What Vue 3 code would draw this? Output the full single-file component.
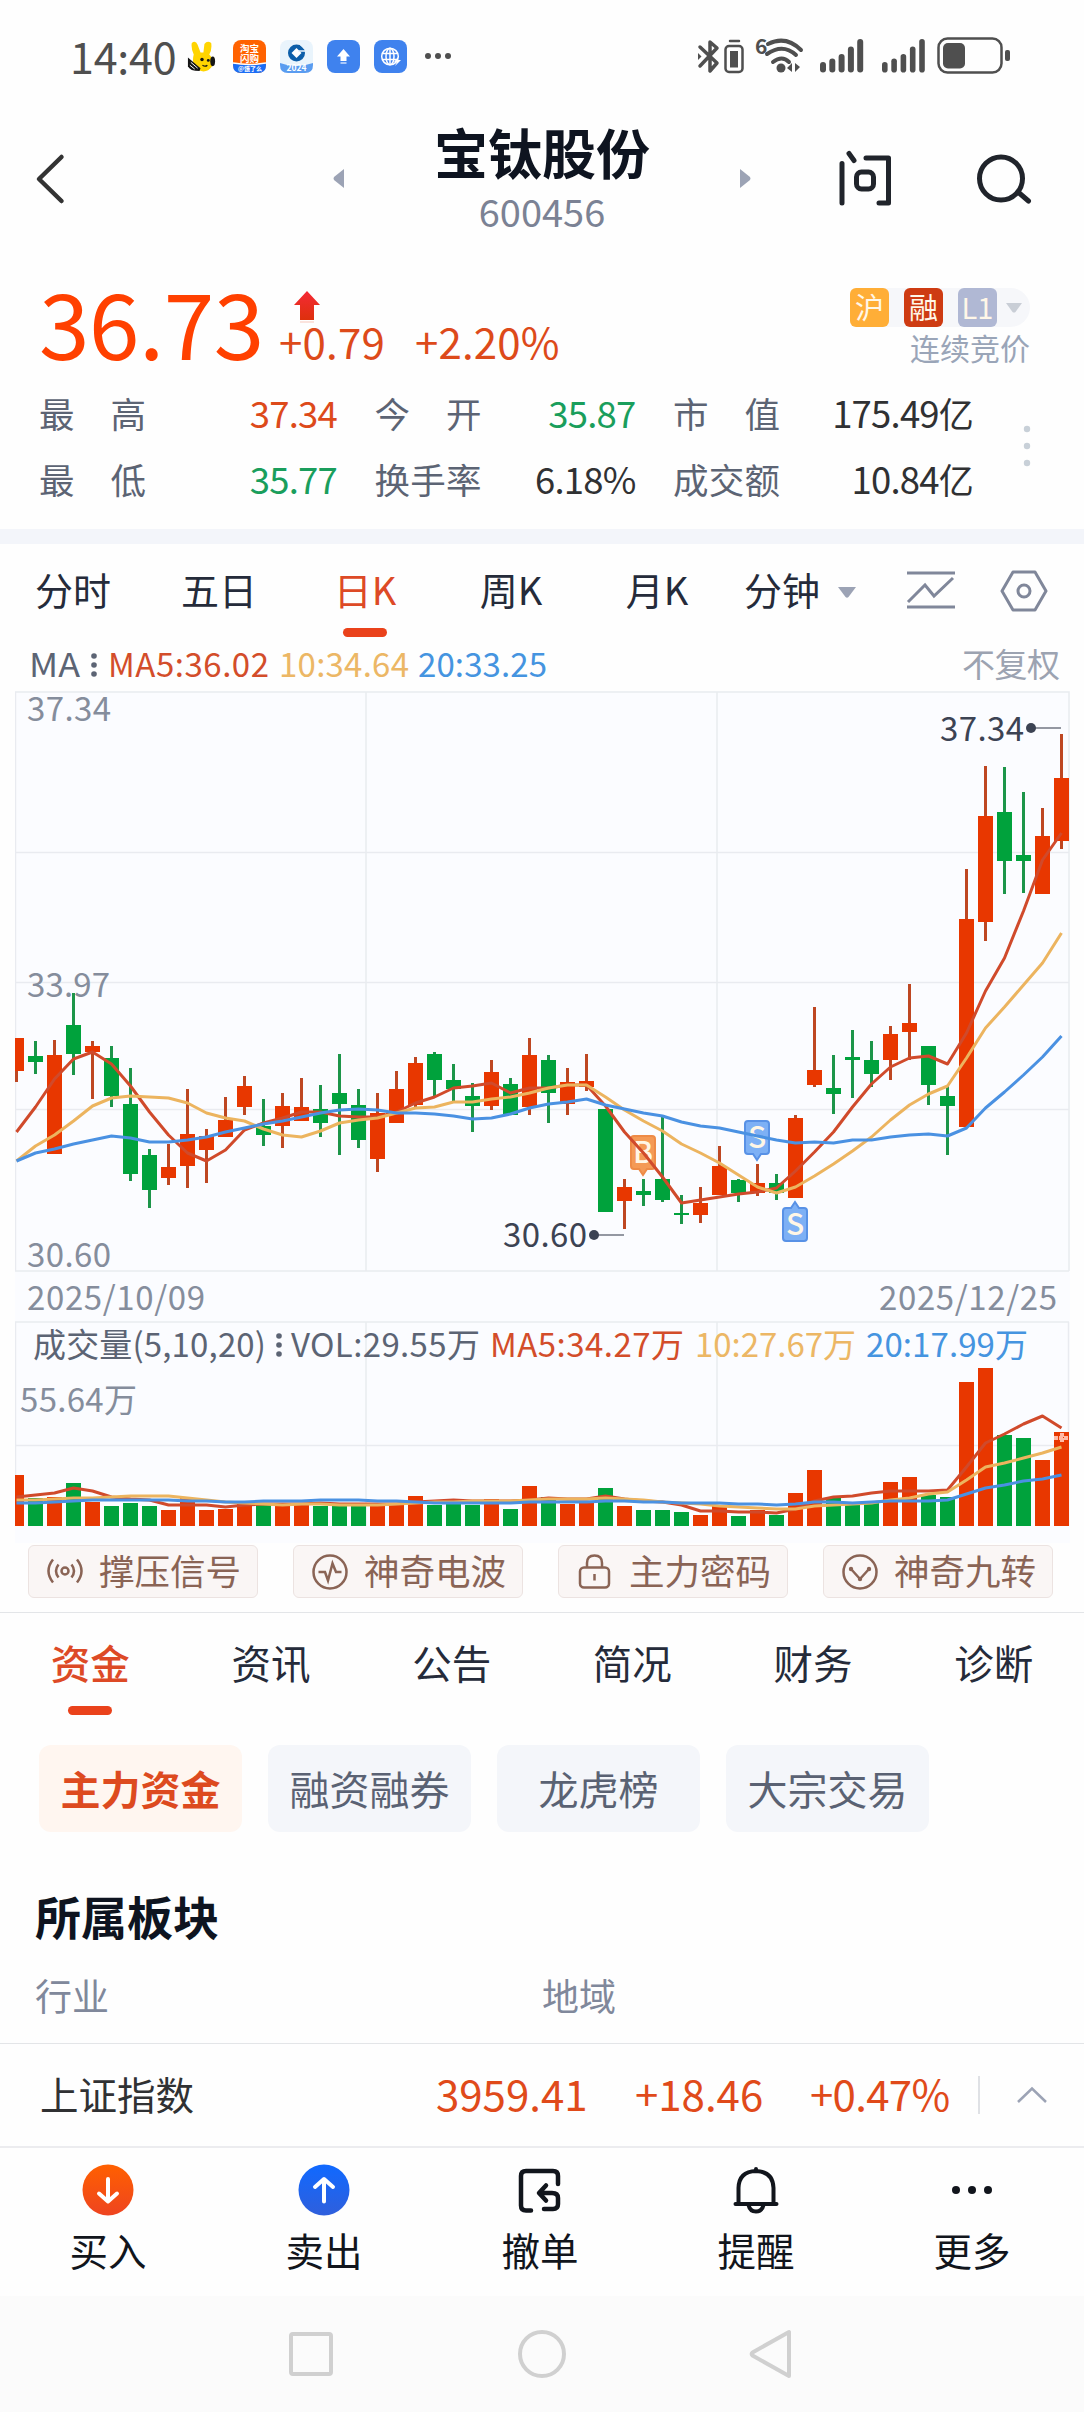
<template>
  <div class="page">
    <!-- Status bar -->
    <div class="status-bar">
      <div class="status-left">
        <span class="clock">14:40</span>
        <svg class="app-icon bunny" viewBox="0 0 30 34">
          <path d="M5 3 Q9 0 11 5 L14 13 L17 13 L18 4 Q21 0 25 3 Q26 10 23 15 Q28 20 26 27 Q20 35 12 31 Q4 26 7 15 Q4 8 5 3Z" fill="#ffd400"/>
          <path d="M1 18 L14 29 L13 32 Q3 32 1 27Z" fill="#151515"/>
          <path d="M4 23 L11 29 M3 26 L8 30" stroke="#fff" stroke-width="1"/>
          <ellipse cx="26.500" cy="22" rx="2.500" ry="5" fill="#151515"/>
          <circle cx="15.500" cy="20" r="1.800" fill="#151515"/>
          <circle cx="22" cy="21" r="1.500" fill="#151515"/>
          <path d="M16 26 Q19 28 21 26" fill="none" stroke="#151515" stroke-width="1.300"/>
        </svg>
        <svg class="app-icon" viewBox="0 0 33 33">
          <rect width="33" height="33" rx="8" fill="#ff6200"/>
          <path d="M0 23.500 Q16 26 33 23.500 V25 Q33 33 25 33 H8 Q0 33 0 25Z" fill="#1b6df5"/>
          <path d="M0 23 Q16 26 33 23" fill="none" stroke="#fff" stroke-width="1.500"/>
          <text x="16.500" y="12" class="mini" font-size="9.500">淘宝</text>
          <text x="16.500" y="21.500" class="mini" font-size="9.500">闪购</text>
          <text x="17" y="31" class="mini" font-size="6">@饿了么</text>
        </svg>
        <svg class="app-icon" viewBox="0 0 33 33">
          <rect width="33" height="33" rx="8" fill="#e9f4fc"/>
          <path d="M0 23 Q16 29 33 23 V25 Q33 33 25 33 H8 Q0 33 0 25Z" fill="#5a9cf0"/>
          <circle cx="16.500" cy="13" r="8.500" fill="#0c5ea9"/>
          <path d="M16.500 8 L21.500 13 L16.500 18 L11.500 13Z" fill="#fff"/>
          <path d="M20 4 L25 9 M18 11 H26" stroke="#e9f4fc" stroke-width="1.500"/>
          <text x="16.500" y="31" class="mini" font-size="8.500">2024</text>
        </svg>
        <svg class="app-icon" viewBox="0 0 33 33">
          <rect width="33" height="33" rx="8" fill="#3f82ee"/>
          <path d="M16.500 9 L23 16.500 H19.500 V21 H13.500 V16.500 H10Z" fill="#fff"/>
          <rect x="13.500" y="22" width="6" height="2" fill="#a9c8fa"/>
        </svg>
        <svg class="app-icon" viewBox="0 0 33 33">
          <rect width="33" height="33" rx="8" fill="#3f82ee"/>
          <g fill="none" stroke="#fff" stroke-width="1.500">
            <circle cx="16" cy="16.500" r="8.300"/>
            <ellipse cx="16" cy="16.500" rx="4" ry="8.300"/>
            <path d="M8 13.500 H24 M8 19.500 H24 M16 8 V25"/>
          </g>
          <path d="M24 17 L20 22 H23 L21 26 L27 20 H24Z" fill="#fff"/>
        </svg>
        <svg class="more-dots" viewBox="0 0 28 8" fill="#4f4f4f">
          <circle cx="4" cy="4" r="3"/><circle cx="14" cy="4" r="3"/><circle cx="24" cy="4" r="3"/>
        </svg>
      </div>

      <svg class="status-right" viewBox="696 34 320 44">
        <g fill="none" stroke="#4f4f4f" stroke-width="3.500" stroke-linejoin="round" stroke-linecap="round">
          <path d="M700 47 L717 63 L710 71 V42 L717 48 L700 66"/>
          <rect x="725.500" y="46" width="17" height="26" rx="3.500" stroke-width="2.500"/>
          <path d="M730 41 H739" stroke-width="2.500"/>
          <path d="M768 44 Q786 35 801 50 M767 54 Q783 43 796 55 M773 62 Q782 55 789 62" stroke-width="4"/>
        </g>
        <path d="M698 53 L701.500 56.500 L698 60Z" fill="#4f4f4f"/>
        <rect x="730" y="51" width="8" height="16.500" fill="#4f4f4f"/>
        <text x="755" y="54" class="wifi-gen">6</text>
        <circle cx="781" cy="68" r="4.500" fill="#4f4f4f"/>
        <path d="M787 68 L792 63 V72 M800 67 L795 72 V63" fill="#4f4f4f"/>
        <g fill="#4f4f4f">
          <rect v-for="(h, i) in signal" :key="'a' + i" :x="820 + i * 9.300" :y="72.500 - h" width="6" :height="h" rx="3"/>
          <rect v-for="(h, i) in signal" :key="'b' + i" :x="882 + i * 9.300" :y="72.500 - h" width="5.600" :height="h" rx="2.800"/>
        </g>
        <rect x="938.500" y="38.500" width="63" height="34" rx="9" fill="none" stroke="#4f4f4f" stroke-width="2.500"/>
        <rect x="943" y="43" width="22" height="25.500" rx="5" fill="#4f4f4f"/>
        <rect x="1005" y="50" width="5" height="11" rx="2" fill="#4f4f4f"/>
      </svg>
    </div>

    <!-- Title bar -->
    <header class="title-bar">
      <svg class="back" viewBox="0 0 30 52">
        <path d="M26.500 4 L4 26 L26.500 48" fill="none" stroke="#333" stroke-width="4.500" stroke-linecap="round" stroke-linejoin="round"/>
      </svg>
      <div class="stock">
        <svg class="switch" viewBox="0 0 12 19"><path d="M11 0 V19 L1 11 Q0 9.500 1 8Z" fill="#9ca3b5"/></svg>
        <div class="stock-name">
          <h1>宝钛股份</h1>
          <div class="stock-code">600456</div>
        </div>
        <svg class="switch" viewBox="0 0 12 19"><path d="M1 0 V19 L11 11 Q12 9.500 11 8Z" fill="#9ca3b5"/></svg>
      </div>
      <svg class="ask" viewBox="838 148 56 60">
        <g fill="none" stroke="#20242b" stroke-width="5" stroke-linecap="round" stroke-linejoin="round">
          <path d="M842 163.500 V203 M849 153.500 L854 160.500 M866 158 H888.500 V203 H879"/>
          <rect x="856.500" y="172" width="17" height="17" rx="5"/>
        </g>
      </svg>
      <svg class="search" viewBox="974 150 60 56">
        <g fill="none" stroke="#20242b" stroke-width="5" stroke-linecap="round">
          <circle cx="1001" cy="178.500" r="21.500"/>
          <path d="M1018 192 L1028.500 201"/>
        </g>
      </svg>
    </header>

    <!-- Quote -->
    <section class="quote">
      <div class="price-row">
        <span class="price">36.73</span>
        <div class="change">
          <svg class="rise" viewBox="0 0 26 32">
            <defs>
              <linearGradient id="rise" x1="0" y1="0" x2="0" y2="1">
                <stop offset="0" stop-color="#f52a36"/>
                <stop offset="1" stop-color="#dd300c"/>
              </linearGradient>
            </defs>
            <path d="M13 0 L26 14 H20 V29 H6 V14 H0Z" fill="url(#rise)"/>
            <rect x="6" y="30" width="14" height="2" fill="#fbe3dd"/>
          </svg>
          <div class="change-values"><span>+0.79</span><span>+2.20%</span></div>
        </div>
        <div class="tags">
          <div class="tag-row">
            <span class="tag amber">沪</span>
            <span class="tag red">融</span>
            <span class="tag slate">L1</span>
            <svg class="caret" viewBox="0 0 16 10"><path d="M0 0 H16 L9.500 9 Q8 10 6.500 9Z" fill="#c9ced6"/></svg>
          </div>
          <div class="phase">连续竞价</div>
        </div>
      </div>
      <div class="facts">
        <div class="fact-rows">
          <div v-for="(row, r) in facts" :key="r" class="fact-row">
            <div v-for="f in row" :key="f.label" class="fact">
              <span class="fact-label">{{ f.label }}</span>
              <span :class="['fact-value', f.tone]">{{ f.value }}<i v-if="f.unit">{{ f.unit }}</i></span>
            </div>
          </div>
        </div>
        <svg class="facts-more" viewBox="0 0 8 44" fill="#c8d0d8">
          <circle cx="4" cy="5" r="3.200"/><circle cx="4" cy="22" r="3.200"/><circle cx="4" cy="39" r="3.200"/>
        </svg>
      </div>
    </section>

    <!-- Period tabs -->
    <nav class="periods">
      <span v-for="p in periods" :key="p" :class="['period', { active: p === '日K' }]">{{ p }}</span>
      <span class="period minutes">分钟
        <svg class="minutes-caret" viewBox="0 0 18 11"><path d="M0 0 H18 L10.500 10 Q9 11.500 7.500 10Z" fill="#9ca3b5"/></svg>
      </span>
      <svg class="period-icon" viewBox="0 0 50 42">
        <g fill="none" stroke="#80879a" stroke-width="3">
          <path d="M1 4 H49 M1 38 H49 M2 33 L19 16 L28 27 L47 9"/>
        </g>
      </svg>
      <svg class="period-icon hex" viewBox="0 0 48 44">
        <g fill="none" stroke="#80879a" stroke-width="3" stroke-linejoin="round">
          <path d="M13 3 H35 L46 22 L35 41 H13 L2 22Z"/>
          <circle cx="24" cy="22" r="6"/>
        </g>
      </svg>
    </nav>

    <!-- MA legend -->
    <div class="legend">
      <svg class="legend-text" viewBox="0 640 1084 52">
        <text x="29" y="677" textLength="51" lengthAdjust="spacingAndGlyphs" class="c-slate">MA</text>
        <g fill="#5c6474"><circle cx="94" cy="656" r="2.800"/><circle cx="94" cy="665" r="2.800"/><circle cx="94" cy="674" r="2.800"/></g>
        <text x="108" y="677" textLength="161" class="c-ma5">MA5:36.02</text>
        <text x="279" y="677" textLength="130" class="c-ma10">10:34.64</text>
        <text x="418" y="677" textLength="129" class="c-ma20">20:33.25</text>
        <text x="962" y="677" textLength="98" class="c-adjust">不复权</text>
      </svg>
    </div>

    <!-- Charts -->
    <svg class="charts" viewBox="15 691 1055 852">
      <rect x="15" y="691" width="1055" height="852" fill="#fbfcff"/>
      <g fill="none" stroke="#e9ebf0" stroke-width="1.500">
        <path d="M15.500 1271 V692 H1069 V1271"/>
        <path d="M15 852.500 H1069 M15 982.500 H1069 M15 1109.500 H1069"/>
        <path d="M366 692 V1271 M717 692 V1271 M15 1271 H1069 M15 1322 H1069"/>
        <path d="M15.500 1526 V1322 M1068.500 1322 V1526 M366 1322 V1526 M717 1322 V1526 M15 1445.500 H1069"/>
      </g>
      <g class="axis">
        <text x="27" y="721" textLength="84">37.34</text>
        <text x="27" y="997" textLength="83">33.97</text>
        <text x="27" y="1267" textLength="84">30.60</text>
        <text x="27" y="1310" textLength="178">2025/10/09</text>
        <text x="879" y="1310" textLength="178">2025/12/25</text>
      </g>

      <g v-for="(c, i) in candles" :key="'k' + i" :class="c[0] === 'R' ? 'up' : 'down'">
        <rect class="wick" :x="candleX(i) - 1.500" :y="c[1]" width="3" :height="c[4] - c[1]"/>
        <rect :x="candleX(i) - 7.500" :y="c[2]" width="15" :height="c[3] - c[2]"/>
      </g>

      <!-- Trade markers -->
      <g v-for="m in markers" :key="m.x">
        <path :d="markerPath(m)" :fill="m.fill" :stroke="m.stroke" stroke-width="2"/>
        <text :x="m.x" :y="m.y + 27" class="marker">{{ m.text }}</text>
      </g>

      <g class="lines">
        <polyline :points="toPoints(ma5)" class="l-ma5"/>
        <polyline :points="toPoints(ma10)" class="l-ma10"/>
        <polyline :points="toPoints(ma20)" class="l-ma20"/>
      </g>

      <!-- Extremes -->
      <g class="extreme">
        <text x="940" y="741" textLength="84">37.34</text>
        <path d="M1031 728 H1061"/>
        <circle cx="1031" cy="728" r="5"/>
        <text x="503" y="1247" textLength="84">30.60</text>
        <path d="M594 1235 H624"/>
        <circle cx="594" cy="1235" r="5"/>
      </g>

      <!-- Volume -->
      <g class="vol-legend">
        <text x="33" y="1357" textLength="233" class="c-slate">成交量(5,10,20)</text>
        <g fill="#5c6474"><circle cx="279" cy="1336" r="2.800"/><circle cx="279" cy="1345" r="2.800"/><circle cx="279" cy="1354" r="2.800"/></g>
        <text x="291" y="1357" textLength="189" class="c-slate">VOL:29.55万</text>
        <text x="490" y="1357" textLength="194" class="c-ma5">MA5:34.27万</text>
        <text x="695" y="1357" textLength="161" class="c-ma10">10:27.67万</text>
        <text x="866" y="1357" textLength="162" class="c-ma20">20:17.99万</text>
        <text x="20" y="1412" textLength="117" class="c-axis">55.64万</text>
      </g>
      <rect
        v-for="(top, i) in volumes"
        :key="'v' + i"
        :class="candles[i][0] === 'R' ? 'up' : 'down'"
        :x="candleX(i) - 7.500"
        :y="top"
        width="15"
        :height="1526 - top"
      />
      <path d="M1054 1438 H1069 M1062 1433 V1442" stroke="#ffb9a5" stroke-width="4" stroke-dasharray="4 1"/>
      <g class="lines">
        <polyline :points="toPoints(vol5)" class="l-ma5"/>
        <polyline :points="toPoints(vol10)" class="l-ma10"/>
        <polyline :points="toPoints(vol20)" class="l-ma20"/>
      </g>
    </svg>

    <!-- Signal shortcuts -->
    <div class="signals">
      <div class="signal">
        <svg viewBox="0 0 36 36">
          <circle cx="18" cy="17" r="3.500"/>
          <path d="M11.500 10.500 Q6.500 17 11.500 23.500 M24.500 10.500 Q29.500 17 24.500 23.500 M6 5.500 Q-3 17 6 28.500 M30 5.500 Q39 17 30 28.500"/>
        </svg>
        <span>撑压信号</span>
      </div>
      <div class="signal">
        <svg viewBox="0 0 36 36">
          <circle cx="18" cy="18" r="16.500"/>
          <path d="M6.500 18 H13 L16 26.500 L20.500 9.500 L24 18 H29.500"/>
        </svg>
        <span>神奇电波</span>
      </div>
      <div class="signal">
        <svg viewBox="0 0 36 36">
          <rect x="3" y="13.500" width="29" height="20" rx="4"/>
          <path d="M10 13 V9 Q10 1.500 17.500 1.500 Q25 1.500 25 9 V13 M17.500 20 V26.500"/>
        </svg>
        <span>主力密码</span>
      </div>
      <div class="signal">
        <svg viewBox="0 0 36 36">
          <circle cx="18" cy="18" r="16.500"/>
          <path d="M9 15 L18 25 L27 15"/>
          <g class="dots"><circle cx="9" cy="15" r="2.200"/><circle cx="18" cy="25" r="2.200"/><circle cx="27" cy="15" r="2.200"/></g>
        </svg>
        <span>神奇九转</span>
      </div>
    </div>

    <!-- Detail tabs -->
    <nav class="tabs">
      <span v-for="(t, i) in tabs" :key="t" :class="['tab', { active: i === 0 }]">{{ t }}</span>
    </nav>
    <div class="pills">
      <span v-for="(p, i) in pills" :key="p" :class="['pill', { active: i === 0 }]">{{ p }}</span>
    </div>

    <section class="sector">
      <h2>所属板块</h2>
      <div class="sector-row"><span>行业</span><span>地域</span></div>
    </section>

    <!-- Index ticker -->
    <div class="index">
      <span class="index-name">上证指数</span>
      <span class="index-num last">3959.41</span>
      <span class="index-num diff">+18.46</span>
      <span class="index-num pct">+0.47%</span>
      <span class="index-sep"></span>
      <svg class="chevron" viewBox="0 0 32 18"><path d="M2 16 L16 2.500 L30 16" fill="none" stroke="#9ca3b5" stroke-width="2.500"/></svg>
    </div>

    <!-- Actions -->
    <nav class="actions">
      <div class="action">
        <svg viewBox="0 0 52 52">
          <defs>
            <linearGradient id="buy" x1="0" y1="0" x2="0" y2="1"><stop offset="0" stop-color="#ff6000"/><stop offset="1" stop-color="#ee4420"/></linearGradient>
          </defs>
          <circle cx="26" cy="26" r="25.500" fill="url(#buy)"/>
          <path d="M26 15 V37 M17 29.500 L26 37.500 L35 29.500" fill="none" stroke="#fff" stroke-width="4" stroke-linecap="round" stroke-linejoin="round"/>
        </svg>
        <span>买入</span>
      </div>
      <div class="action">
        <svg viewBox="0 0 52 52">
          <defs>
            <linearGradient id="sell" x1="0" y1="0" x2="0" y2="1"><stop offset="0" stop-color="#1069ff"/><stop offset="1" stop-color="#2f5fdc"/></linearGradient>
          </defs>
          <circle cx="26" cy="26" r="25.500" fill="url(#sell)"/>
          <path d="M26 37.500 V15.500 M17 23 L26 15 L35 23" fill="none" stroke="#fff" stroke-width="4" stroke-linecap="round" stroke-linejoin="round"/>
        </svg>
        <span>卖出</span>
      </div>
      <div class="action">
        <svg viewBox="0 0 52 52">
          <g fill="none" stroke="#11151c" stroke-width="4.500" stroke-linecap="round" stroke-linejoin="round">
            <path d="M17 46.500 H12 Q7 46.500 7 41.500 V12 Q7 7 12 7 H39 Q44 7 44 12 V20"/>
            <path d="M32 21.500 L25 29 L32 36.500 M26 29 H38 Q44 29 44 34 V40 Q44 45 39 45 H30"/>
          </g>
        </svg>
        <span>撤单</span>
      </div>
      <div class="action">
        <svg viewBox="0 0 52 52">
          <g fill="none" stroke="#11151c" stroke-width="4" stroke-linecap="round" stroke-linejoin="round">
            <path d="M5.500 40 H46.500 M8.500 39 V24 Q9 7.500 26 7 Q43 7.500 43.500 24 V39 M26 7 V5"/>
            <path d="M18.500 41 Q20 47.500 26 47.500 Q32 47.500 33.500 41"/>
          </g>
        </svg>
        <span>提醒</span>
      </div>
      <div class="action">
        <svg viewBox="0 0 52 52" fill="#11151c">
          <circle cx="10" cy="26" r="4"/><circle cx="26" cy="26" r="4"/><circle cx="42" cy="26" r="4"/>
        </svg>
        <span>更多</span>
      </div>
    </nav>

    <!-- System navigation -->
    <div class="sys-nav">
      <svg viewBox="280 2320 520 70">
        <g fill="none" stroke="#d0d0d0" stroke-width="4" stroke-linejoin="round">
          <rect x="291" y="2334" width="40" height="40" rx="2"/>
          <circle cx="542" cy="2354" r="22"/>
          <path d="M789 2332 V2376 L752.500 2355.500 Q751 2354 752.500 2352.500Z"/>
        </g>
      </svg>
    </div>
  </div>
</template>

<script setup>
const signal = [10.5, 14, 18.5, 26, 33.5];

const facts = [
  [
    { label: '最 高', value: '37.34', tone: 'rise-text' },
    { label: '今 开', value: '35.87', tone: 'fall-text' },
    { label: '市 值', value: '175.49', unit: '亿', tone: '' }
  ],
  [
    { label: '最 低', value: '35.77', tone: 'fall-text' },
    { label: '换手率', value: '6.18%', tone: '' },
    { label: '成交额', value: '10.84', unit: '亿', tone: '' }
  ]
];

const periods = ['分时', '五日', '日K', '周K', '月K'];
const tabs = ['资金', '资讯', '公告', '简况', '财务', '诊断'];
const pills = ['主力资金', '融资融券', '龙虎榜', '大宗交易'];

// [direction, high, body top, body bottom, low] in chart units
const candles = [
  ['R', 1038, 1038, 1071, 1082],
  ['G', 1041, 1056, 1062, 1074],
  ['R', 1040, 1055, 1154, 1154],
  ['G', 993, 1025, 1054, 1075],
  ['R', 1041, 1046, 1052, 1099],
  ['G', 1046, 1058, 1096, 1107],
  ['G', 1068, 1104, 1174, 1181],
  ['G', 1149, 1155, 1190, 1208],
  ['R', 1144, 1167, 1178, 1185],
  ['R', 1089, 1134, 1166, 1188],
  ['R', 1129, 1136, 1150, 1183],
  ['R', 1097, 1120, 1137, 1137],
  ['R', 1076, 1086, 1107, 1115],
  ['G', 1099, 1126, 1135, 1146],
  ['R', 1093, 1106, 1126, 1148],
  ['R', 1078, 1107, 1121, 1121],
  ['G', 1085, 1109, 1123, 1137],
  ['G', 1054, 1093, 1104, 1155],
  ['G', 1089, 1105, 1140, 1148],
  ['R', 1093, 1113, 1159, 1172],
  ['R', 1071, 1089, 1123, 1123],
  ['R', 1057, 1063, 1105, 1109],
  ['G', 1052, 1054, 1080, 1097],
  ['G', 1064, 1080, 1089, 1101],
  ['G', 1083, 1096, 1106, 1132],
  ['R', 1060, 1072, 1106, 1110],
  ['G', 1078, 1084, 1115, 1115],
  ['R', 1038, 1055, 1107, 1115],
  ['G', 1055, 1060, 1093, 1123],
  ['R', 1068, 1082, 1104, 1115],
  ['R', 1054, 1081, 1087, 1091],
  ['G', 1109, 1109, 1212, 1212],
  ['R', 1179, 1187, 1201, 1229],
  ['G', 1179, 1191, 1195, 1206],
  ['G', 1116, 1179, 1200, 1202],
  ['G', 1195, 1213, 1215, 1224],
  ['R', 1187, 1203, 1215, 1223],
  ['R', 1146, 1166, 1195, 1195],
  ['G', 1179, 1180, 1193, 1202],
  ['R', 1164, 1183, 1193, 1196],
  ['G', 1174, 1183, 1193, 1200],
  ['R', 1115, 1118, 1198, 1198],
  ['R', 1007, 1070, 1085, 1087],
  ['G', 1055, 1088, 1094, 1114],
  ['G', 1030, 1057, 1060, 1098],
  ['G', 1041, 1060, 1074, 1087],
  ['R', 1026, 1034, 1060, 1080],
  ['R', 984, 1023, 1032, 1060],
  ['G', 1046, 1046, 1085, 1105],
  ['G', 1085, 1096, 1106, 1155],
  ['R', 869, 919, 1127, 1127],
  ['R', 766, 816, 922, 941],
  ['G', 767, 812, 861, 894],
  ['G', 792, 855, 861, 893],
  ['R', 808, 836, 894, 894],
  ['R', 734, 778, 841, 849]
];

const ma5 = [
  1132, 1107, 1079, 1059, 1052, 1064, 1086, 1112, 1135, 1153, 1161, 1150, 1130, 1123,
  1118, 1112, 1112, 1116, 1117, 1117, 1112, 1103, 1097, 1088, 1086, 1083, 1093, 1088,
  1088, 1085, 1085, 1106, 1132, 1153, 1177, 1203, 1200, 1197, 1194, 1192, 1188, 1171,
  1152, 1132, 1107, 1084, 1067, 1058, 1056, 1064, 1033, 991, 958, 911, 860, 833
];
const ma10 = [
  1161, 1146, 1135, 1121, 1106, 1098, 1096, 1097, 1098, 1103, 1113, 1118, 1121, 1129,
  1135, 1137, 1131, 1123, 1120, 1118, 1113, 1108, 1107, 1102, 1102, 1099, 1097, 1093,
  1088, 1085, 1085, 1097, 1110, 1121, 1131, 1144, 1153, 1163, 1175, 1187, 1193, 1187,
  1176, 1164, 1151, 1137, 1120, 1105, 1094, 1086, 1058, 1028, 1007, 985, 963, 933
];
const ma20 = [
  1161, 1153, 1149, 1144, 1140, 1136, 1138, 1142, 1142, 1140, 1137, 1132, 1128, 1124,
  1121, 1117, 1113, 1110, 1109, 1110, 1113, 1113, 1114, 1116, 1119, 1118, 1114, 1108,
  1104, 1102, 1099, 1105, 1109, 1113, 1116, 1122, 1126, 1128, 1132, 1136, 1140, 1143,
  1142, 1143, 1140, 1140, 1137, 1135, 1134, 1136, 1128, 1108, 1092, 1075, 1057, 1036
];

const volumes = [
  1475, 1498, 1497, 1483, 1502, 1506, 1503, 1506, 1510, 1498, 1510, 1509, 1503, 1503,
  1505, 1505, 1506, 1506, 1506, 1505, 1505, 1496, 1505, 1504, 1505, 1499, 1509, 1486,
  1497, 1504, 1502, 1488, 1506, 1510, 1510, 1512, 1515, 1506, 1516, 1510, 1515, 1493,
  1470, 1498, 1504, 1503, 1482, 1477, 1495, 1497, 1382, 1368, 1435, 1438, 1460, 1432
];
const vol5 = [
  1497, 1495, 1493, 1488, 1491, 1497, 1499, 1500, 1505, 1505, 1505, 1507, 1505, 1504,
  1504, 1504, 1503, 1504, 1504, 1504, 1504, 1502, 1501, 1500, 1501, 1501, 1501, 1500,
  1498, 1499, 1499, 1496, 1499, 1501, 1502, 1505, 1511, 1511, 1512, 1512, 1513, 1509,
  1501, 1497, 1496, 1493, 1491, 1491, 1491, 1490, 1467, 1443, 1434, 1424, 1416, 1428
];
const vol10 = [
  1500, 1500, 1499, 1498, 1498, 1497, 1496, 1496, 1496, 1498, 1500, 1502, 1503, 1504,
  1505, 1504, 1504, 1505, 1505, 1505, 1504, 1503, 1502, 1502, 1501, 1501, 1501, 1500,
  1499, 1499, 1499, 1498, 1499, 1500, 1502, 1503, 1504, 1506, 1507, 1508, 1509, 1509,
  1506, 1505, 1504, 1503, 1500, 1498, 1494, 1492, 1480, 1467, 1463, 1458, 1453, 1447
];
const vol20 = [
  1503, 1503, 1502, 1501, 1500, 1500, 1500, 1500, 1500, 1501, 1501, 1502, 1502, 1501,
  1501, 1501, 1500, 1500, 1500, 1501, 1501, 1502, 1503, 1503, 1503, 1503, 1503, 1502,
  1502, 1502, 1502, 1501, 1501, 1502, 1502, 1503, 1503, 1503, 1504, 1504, 1505, 1504,
  1502, 1502, 1503, 1502, 1501, 1501, 1501, 1500, 1494, 1488, 1485, 1481, 1479, 1475
];

const markers = [
  { text: 'B', x: 643, y: 1136, fill: '#f49a56', stroke: '#ee8b47', up: false },
  { text: 'S', x: 757, y: 1121, fill: '#7db0f5', stroke: '#5891e6', up: false },
  { text: 'S', x: 795, y: 1208, fill: '#7db0f5', stroke: '#5891e6', up: true }
];

const candleX = (i) => 16.5 + i * 19;

const toPoints = (series) => series.map((y, i) => `${candleX(i)},${y}`).join(' ');

// Rounded flag with a small pointer on its top or bottom edge
const markerPath = ({ x, y, up }) => {
  const top = up ? `L${x - 4} ${y} L${x} ${y - 6} L${x + 4} ${y}` : '';
  const bottom = up ? '' : `L${x + 4} ${y + 33} L${x} ${y + 39} L${x - 4} ${y + 33}`;
  return `M${x - 9} ${y} ${top} L${x + 9} ${y} Q${x + 12} ${y} ${x + 12} ${y + 3} V${y + 30} Q${x + 12} ${y + 33} ${x + 9} ${y + 33} ${bottom} L${x - 9} ${y + 33} Q${x - 12} ${y + 33} ${x - 12} ${y + 30} V${y + 3} Q${x - 12} ${y} ${x - 9} ${y}Z`;
};
</script>

<style>
body {
  margin: 0;
  background: #fefefe;
}
</style>

<style scoped>
.page {
  width: 1084px;
  height: 2412px;
  overflow: hidden;
  display: flex;
  flex-direction: column;
  background: #fefefe;
  color: #252b3a;
  font-family: "Noto Sans CJK SC", "Noto Sans", sans-serif;
}

.page > * {
  flex-shrink: 0;
}

svg {
  display: block;
  flex-shrink: 0;
}

/* Status bar */
.status-bar {
  height: 112px;
  box-sizing: border-box;
  padding: 0 68px 0 70px;
  display: flex;
  justify-content: space-between;
  align-items: center;
}

.status-left {
  display: flex;
  align-items: center;
  gap: 14px;
}

.clock {
  width: 101px;
  margin-top: -3px;
  font-size: 43px;
  line-height: 60px;
  letter-spacing: -0.2px;
  color: #4f4f4f;
}

.app-icon {
  width: 33px;
  height: 33px;
}

.bunny {
  margin-right: 1px;
}

.mini {
  fill: #fff;
  text-anchor: middle;
  font-weight: 700;
}

.more-dots {
  width: 28px;
  height: 8px;
  margin-left: 3px;
}

.status-right {
  width: 320px;
  height: 44px;
  overflow: visible;
}

.wifi-gen {
  font-size: 21px;
  font-weight: 700;
  fill: #4f4f4f;
}

/* Title bar */
.title-bar {
  height: 148px;
  box-sizing: border-box;
  padding: 0 50px 0 35px;
  display: flex;
  align-items: center;
}

.back {
  width: 30px;
  height: 52px;
  margin-top: -14px;
}

.stock {
  width: 418px;
  margin-left: 268px;
  margin-top: -19px;
  display: flex;
  align-items: center;
  justify-content: space-between;
}

.switch {
  width: 12px;
  height: 19px;
  margin-top: 4px;
}

.stock-name {
  text-align: center;
}

.stock-name h1 {
  margin: 0;
  font-size: 54px;
  line-height: 68px;
  font-weight: 700;
  color: #0e1420;
}

.stock-code {
  font-size: 38px;
  line-height: 50px;
  color: #7b8294;
}

.ask {
  width: 56px;
  height: 60px;
  margin: -16px 0 0 87px;
}

.search {
  width: 60px;
  height: 56px;
  margin: -16px 0 0 80px;
}

/* Quote */
.quote {
  height: 269px;
  border-bottom: 15px solid #f3f5fa;
}

.price-row {
  height: 121px;
  padding: 0 54px 0 39px;
  display: flex;
  align-items: flex-start;
}

.price {
  width: 240px;
  font-size: 91px;
  line-height: 121px;
  letter-spacing: -0.5px;
  color: #ff4000;
}

.change {
  flex: 1;
  padding-top: 31px;
}

.rise {
  width: 26px;
  height: 32px;
  margin-left: 15px;
}

.change-values {
  display: flex;
  gap: 30px;
  margin-top: -4px;
  font-size: 42px;
  line-height: 44px;
  letter-spacing: 0.2px;
  color: #dd4a1a;
}

.tags {
  width: 180px;
  padding-top: 28px;
}

.tag-row {
  display: flex;
  align-items: center;
  height: 39px;
  gap: 15px;
  background: #f6f7fa;
  border-radius: 8px 20px 20px 8px;
}

.tag {
  width: 39px;
  height: 39px;
  border-radius: 6px;
  font-size: 29px;
  line-height: 37px;
  text-align: center;
  color: #fff7e8;
}

.tag.amber {
  background: #ffae37;
}

.tag.red {
  background: #ce3b12;
}

.tag.slate {
  background: #b0b8d4;
}

.caret {
  width: 16px;
  height: 10px;
  margin-left: -6px;
}

.phase {
  font-size: 30px;
  line-height: 40px;
  text-align: right;
  color: #9aa5b8;
}

.facts {
  display: flex;
  padding: 0 53px 0 39px;
  justify-content: space-between;
}

.fact-rows {
  width: 934px;
}

.fact-row {
  height: 66px;
  display: flex;
  justify-content: space-between;
}

.fact {
  width: 298px;
  display: flex;
  justify-content: space-between;
  line-height: 64px;
}

.fact:nth-child(2) {
  width: 261px;
}

.fact:nth-child(3) {
  width: 300px;
}

.fact-label {
  width: 107px;
  font-size: 35.5px;
  text-align: justify;
  text-align-last: justify;
  color: #5c6474;
}

.fact-value {
  font-size: 36.5px;
  letter-spacing: -0.8px;
  color: #303133;
}

.fact-value i {
  font-style: normal;
  font-size: 35px;
}

.fact-value.rise-text {
  color: #dd4a1a;
}

.fact-value.fall-text {
  color: #1a9e5c;
}

.facts-more {
  width: 8px;
  height: 44px;
  margin-top: 43px;
}

/* Period tabs */
.periods {
  height: 96px;
  display: flex;
  align-items: flex-start;
  font-size: 38px;
  line-height: 90px;
  color: #252b3a;
}

.period {
  width: 146px;
  text-align: center;
  position: relative;
}

.period.active {
  color: #dd4a26;
}

.period.active::after,
.tab.active::after {
  content: "";
  position: absolute;
  left: 50%;
  width: 44px;
  height: 9px;
  margin-left: -22px;
  border-radius: 5px;
  background: #ea421b;
}

.period.active::after {
  top: 84px;
}

.minutes {
  width: 156px;
  margin-left: 14px;
  display: flex;
  align-items: center;
  gap: 18px;
}

.minutes-caret {
  width: 18px;
  height: 11px;
  margin-top: 6px;
}

.period-icon {
  width: 50px;
  height: 42px;
  margin-top: 25px;
  margin-left: 6px;
}

.period-icon.hex {
  width: 48px;
  height: 44px;
  margin-left: 44px;
}

/* Charts */
.legend {
  height: 51px;
}

.legend-text {
  width: 1084px;
  height: 52px;
  font-size: 33px;
}

.charts {
  width: 1055px;
  height: 852px;
  margin-left: 15px;
  font-size: 33px;
}

.c-slate {
  fill: #5c6474;
}

.c-ma5 {
  fill: #d34d2a;
}

.c-ma10 {
  fill: #ecb765;
}

.c-ma20 {
  fill: #4594e0;
}

.c-adjust {
  fill: #9ca3b1;
}

.axis,
.c-axis {
  fill: #858d9c;
}

.up {
  fill: #e83700;
}

.down {
  fill: #00a23c;
}

.up .wick {
  fill: #be4722;
}

.down .wick {
  fill: #1c9549;
}

.marker {
  font-size: 30px;
  font-weight: 500;
  text-anchor: middle;
  fill: #fff6e6;
}

.lines {
  fill: none;
  stroke-width: 3;
  stroke-linejoin: round;
}

.l-ma5 {
  stroke: #d04a2b;
}

.l-ma10 {
  stroke: #ecb45f;
}

.l-ma20 {
  stroke: #4a91e2;
}

.extreme {
  fill: #3c4353;
}

.extreme path {
  stroke: #9498a2;
  stroke-width: 2;
}

/* Signal shortcuts */
.signals {
  height: 70px;
  padding: 2px 31px 0 28px;
  box-sizing: border-box;
  display: flex;
  justify-content: space-between;
  border-bottom: 1px solid #e3e5e8;
}

.signal {
  width: 230px;
  height: 53px;
  box-sizing: border-box;
  padding-left: 18px;
  display: flex;
  align-items: center;
  gap: 16px;
  border: 1.5px solid #ece3e1;
  border-radius: 6px;
  background: #faf6f5;
  font-size: 35.5px;
  line-height: 48px;
  color: #8a6455;
}

.signal svg {
  width: 36px;
  height: 36px;
  fill: none;
  stroke: #8a6455;
  stroke-width: 2.5;
}

.signal .dots {
  fill: #8a6455;
  stroke: none;
}

.signal span {
  margin-top: -3px;
}

/* Detail tabs */
.tabs {
  height: 132px;
  display: flex;
  font-size: 39.5px;
  line-height: 98px;
}

.tab {
  flex: 1;
  text-align: center;
  position: relative;
}

.tab.active {
  color: #dd4a26;
  font-weight: 500;
}

.tab.active::after {
  top: 93px;
}

.pills {
  height: 87px;
  padding-left: 39px;
  display: flex;
  gap: 26px;
}

.pill {
  width: 203px;
  height: 87px;
  border-radius: 12px;
  background: #f4f6fa;
  font-size: 40px;
  line-height: 87px;
  text-align: center;
  color: #5a6273;
}

.pill.active {
  background: #fff6f0;
  color: #dd4a1f;
  font-weight: 700;
}

.sector {
  height: 212px;
  box-sizing: border-box;
  padding: 51px 35px 0;
  border-bottom: 1px solid #e3e5e8;
}

.sector h2 {
  margin: 0;
  font-size: 46px;
  line-height: 64px;
  font-weight: 700;
  color: #0e1420;
}

.sector-row {
  display: flex;
  margin-top: 23px;
  font-size: 37px;
  line-height: 50px;
  color: #80889b;
}

.sector-row span {
  width: 509px;
}

/* Index ticker */
.index {
  height: 104px;
  box-sizing: border-box;
  border-bottom: 2px solid #ececef;
  padding-left: 40px;
  display: flex;
  align-items: center;
  line-height: 60px;
}

.index-name {
  width: 396px;
  margin-top: -4px;
  font-size: 38.5px;
  color: #303133;
}

.index-num {
  margin-top: -4px;
  font-size: 42px;
  color: #e04a1a;
}

.index-num.last {
  width: 199px;
}

.index-num.diff {
  width: 175px;
}

.index-num.pct {
  width: 168px;
  letter-spacing: -0.7px;
}

.index-sep {
  width: 2px;
  height: 38px;
  background: #dfe1e5;
}

.chevron {
  width: 32px;
  height: 18px;
  margin-left: 36px;
}

/* Actions */
.actions {
  width: 1080px;
  height: 148px;
  display: flex;
}

.action {
  flex: 1;
  display: flex;
  flex-direction: column;
  align-items: center;
  padding-top: 16px;
  font-size: 38.5px;
  line-height: 64px;
  color: #11151c;
}

.action svg {
  width: 52px;
  height: 52px;
}

.action span {
  margin-top: 1px;
}

.sys-nav {
  flex: 1;
  background: #fbfbfb;
}

.sys-nav svg {
  width: 520px;
  height: 70px;
  margin: 24px 0 0 280px;
}
</style>
